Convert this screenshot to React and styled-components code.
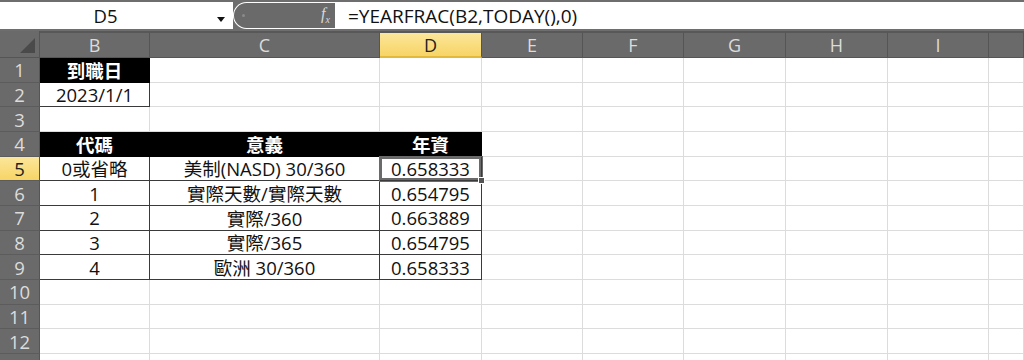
import React from 'react';
import styled, { createGlobalStyle, css } from 'styled-components';

const GlobalStyle = createGlobalStyle`
  html, body {
    margin: 0;
    padding: 0;
    background: #ffffff;
    overflow: hidden;
  }
  body {
    font-family: "Open Sans", "Noto Sans CJK TC", sans-serif;
  }
`;

const font = `"Open Sans", "Noto Sans CJK TC", sans-serif`;

const columns = ['B', 'C', 'D', 'E', 'F', 'G', 'H', 'I', ''];
const colWidths = '40px 110px 230px 102px 101px 101px 102px 102px 101px 1fr';

const sheet = [
  [{ text: '到職日', dark: true }, {}, {}],
  [{ text: '2023/1/1', boxed: true }, {}, {}],
  [{}, {}, {}],
  [
    { text: '代碼', dark: true },
    { text: '意義', dark: true },
    { text: '年資', dark: true },
  ],
  [
    { text: '0或省略', boxed: true },
    { text: '美制(NASD) 30/360', boxed: true },
    { text: '0.658333', boxed: true, selected: true },
  ],
  [
    { text: '1', boxed: true },
    { text: '實際天數/實際天數', boxed: true },
    { text: '0.654795', boxed: true },
  ],
  [
    { text: '2', boxed: true },
    { text: '實際/360', boxed: true },
    { text: '0.663889', boxed: true },
  ],
  [
    { text: '3', boxed: true },
    { text: '實際/365', boxed: true },
    { text: '0.654795', boxed: true },
  ],
  [
    { text: '4', boxed: true },
    { text: '歐洲 30/360', boxed: true },
    { text: '0.658333', boxed: true },
  ],
  [{}, {}, {}],
  [{}, {}, {}],
  [{}, {}, {}],
  [{}, {}, {}],
];

const App = () => {
  return (
    <>
      <GlobalStyle />
      <Window>
        <FormulaBar>
          <NameBox>
            <span>D5</span>
            <DropArrow />
          </NameBox>
          <FxPill>
            <Dot />
            <Fx>
              f<sub>x</sub>
            </Fx>
          </FxPill>
          <FormulaInput>=YEARFRAC(B2,TODAY(),0)</FormulaInput>
        </FormulaBar>
        <Grid>
          <Corner>
            <CornerTriangle />
          </Corner>
          {columns.map((c, i) => (
            <ColHeader key={i} $active={c === 'D'}>
              {c}
            </ColHeader>
          ))}
          {sheet.map((row, r) => (
            <React.Fragment key={r}>
              {/* last row is only partly on screen, its number is cut off */}
              <RowHeader $active={r === 4}>{r < 12 ? r + 1 : ''}</RowHeader>
              {row.map((cell, c) => (
                <Cell
                  key={c}
                  $dark={cell.dark}
                  $boxed={cell.boxed}
                  $selected={cell.selected}
                >
                  {cell.text}
                  {cell.selected && <Handle />}
                </Cell>
              ))}
              {columns.slice(3).map((_, c) => (
                <Cell key={'e' + c} />
              ))}
            </React.Fragment>
          ))}
        </Grid>
      </Window>
    </>
  );
};

const Window = styled.div`
  width: 1024px;
  height: 360px;
  overflow: hidden;
  background: #fff;
`;

const FormulaBar = styled.div`
  display: flex;
  height: 27px;
  padding: 2px 0;
  background: #6e6e6e;
`;

const NameBox = styled.div`
  position: relative;
  width: 233px;
  background: #fff;
  display: flex;
  align-items: center;
  justify-content: center;
  font-family: ${font};
  font-size: 18.5px;
  color: #111;
  span {
    margin-right: 22px;
  }
`;

const DropArrow = styled.div`
  position: absolute;
  right: 8px;
  top: 15px;
  width: 0;
  height: 0;
  border-left: 4px solid transparent;
  border-right: 4px solid transparent;
  border-top: 5px solid #111;
`;

const FxPill = styled.div`
  width: 103px;
  display: flex;
  align-items: center;
  justify-content: space-between;
  background: #6a6a6a;
  border-radius: 14px 0 0 14px;
  box-shadow: 0 0 0 1px #fff inset;
  padding: 0 6px 0 9px;
  box-sizing: border-box;
`;

const Dot = styled.div`
  width: 3px;
  height: 3px;
  border-radius: 50%;
  background: #8a8a8a;
`;

const Fx = styled.div`
  font-family: "Liberation Serif", serif;
  font-style: italic;
  font-size: 16px;
  color: #d8d8d8;
  line-height: 1;
  sub {
    font-size: 10px;
  }
`;

const FormulaInput = styled.div`
  flex: 1;
  background: #fff;
  display: flex;
  align-items: center;
  padding-left: 12px;
  font-family: ${font};
  font-size: 19px;
  color: #111;
`;

const Grid = styled.div`
  display: grid;
  grid-template-columns: ${colWidths};
  grid-template-rows: 27px repeat(13, 24.67px);
`;

const headerBase = css`
  background: #6a6a6a;
  color: #dcdcdc;
  font-family: ${font};
  font-size: 18px;
  display: flex;
  align-items: center;
  justify-content: center;
  box-sizing: border-box;
`;

const activeHeader = css`
  background: linear-gradient(#fbe69a, #f7d465);
  color: #222;
`;

const Corner = styled.div`
  ${headerBase};
  position: relative;
  border-right: 1px solid #555;
  border-bottom: 1px solid #555;
`;

const CornerTriangle = styled.div`
  position: absolute;
  right: 4px;
  bottom: 4px;
  width: 0;
  height: 0;
  border-left: 15px solid transparent;
  border-bottom: 15px solid #4a4a4a;
`;

const ColHeader = styled.div`
  ${headerBase};
  border-top: 2px solid #585858;
  border-right: 1px solid #555;
  border-bottom: 1px solid #555;
  ${(p) =>
    p.$active &&
    css`
      ${activeHeader};
      border-bottom: 2px solid #e2b93b;
    `}
`;

const RowHeader = styled.div`
  ${headerBase};
  font-size: 18.5px;
  border-right: 1px solid #555;
  border-bottom: 1px solid #5c5c5c;
  ${(p) => p.$active && activeHeader}
`;

const Cell = styled.div`
  position: relative;
  box-sizing: border-box;
  display: flex;
  align-items: center;
  justify-content: center;
  font-family: ${font};
  font-size: 18.5px;
  color: #111;
  white-space: nowrap;
  border-right: 1px solid #dcdcdc;
  border-bottom: 1px solid #dcdcdc;
  ${(p) =>
    p.$boxed &&
    css`
      border-right-color: #3a3a3a;
      border-bottom-color: #3a3a3a;
    `}
  ${(p) =>
    p.$dark &&
    css`
      background: #000;
      color: #fff;
      font-weight: bold;
      border-right-color: #000;
      border-bottom-color: #000;
    `}
  ${(p) =>
    p.$selected &&
    css`
      box-shadow: inset 0 0 0 2px #6a6a6a, 0 0 0 1px #6a6a6a;
      z-index: 1;
    `}
`;

const Handle = styled.div`
  position: absolute;
  right: -4px;
  bottom: -4px;
  width: 5px;
  height: 5px;
  background: #555;
  border: 1px solid #fff;
`;

export default App;
